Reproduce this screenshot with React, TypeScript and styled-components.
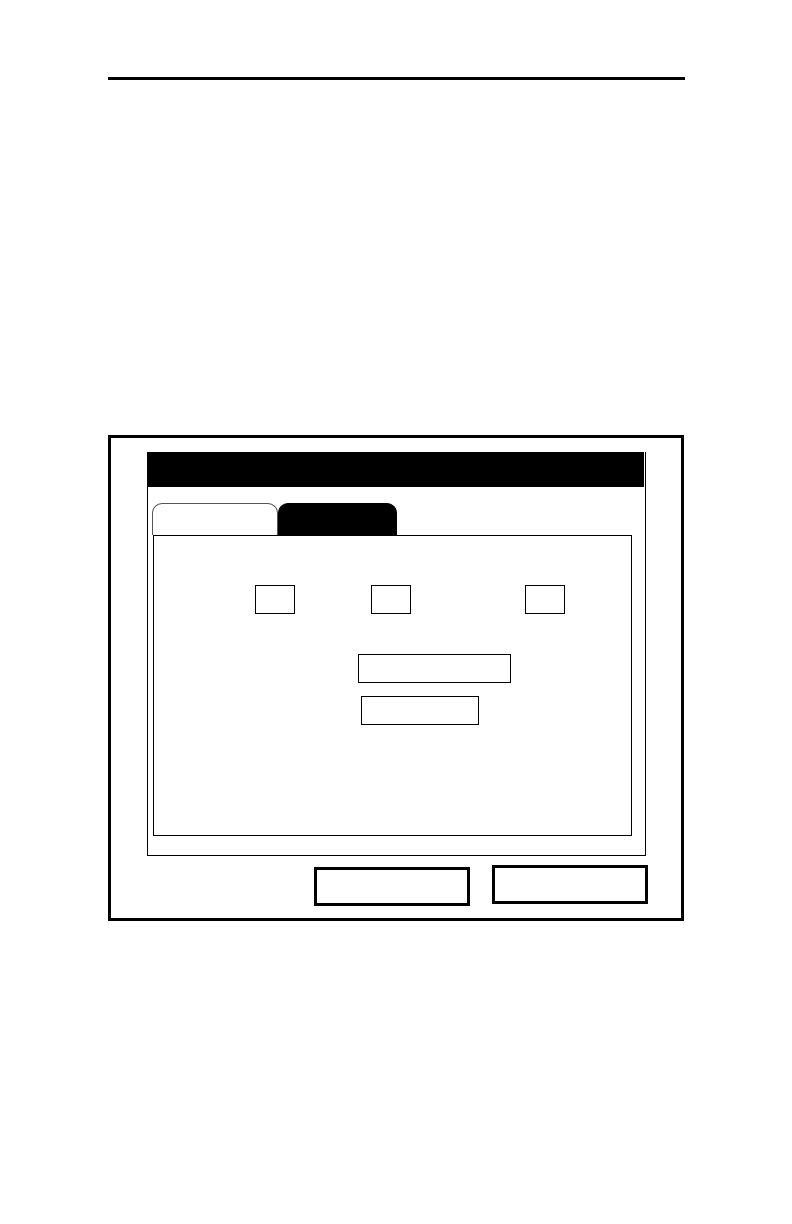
import styled, { createGlobalStyle } from 'styled-components';

const GlobalStyle = createGlobalStyle`
  html, body {
    margin: 0;
    padding: 0;
    background: #ffffff;
    font-family: "Liberation Sans", Arial, sans-serif;
  }
`;

const Page = styled.div`
  width: 792px;
  min-height: 1224px;
  padding: 77px 0 0 108px;
  box-sizing: border-box;
`;

const Rule = styled.div`
  width: 577px;
  height: 3px;
  background: #000;
`;

const Frame = styled.div`
  margin-top: 355px;
  width: 576px;
  height: 486px;
  box-sizing: border-box;
  border: 3px solid #000;
  padding: 14px 0 0 36px;
  display: flex;
  flex-direction: column;
`;

const Screen = styled.div`
  width: 499px;
  height: 404px;
  box-sizing: border-box;
  border: 1px solid #000;
  border-top: none;
  display: flex;
  flex-direction: column;
  padding: 0 0 0 4px;
`;

const TitleBar = styled.div`
  height: 35px;
  margin: 0 1px 0 -4px;
  background: #000;
`;

const Tabs = styled.div`
  display: flex;
  margin-top: 16px;
  height: 32px;
`;

const Tab = styled.div<{ $active?: boolean; $width: number }>`
  width: ${({ $width }) => $width}px;
  box-sizing: border-box;
  border: 1px solid ${({ $active }) => ($active ? '#000' : '#555')};
  border-bottom: none;
  border-radius: 10px 10px 0 0;
  background: ${({ $active }) => ($active ? '#000' : '#fff')};
`;

const Panel = styled.div`
  width: 479px;
  height: 301px;
  margin-left: 1px;
  box-sizing: border-box;
  border: 1px solid #000;
  display: flex;
  flex-direction: column;
`;

const Row = styled.div<{ $top: number; $left: number }>`
  display: flex;
  margin-top: ${({ $top }) => $top}px;
  padding-left: ${({ $left }) => $left}px;
`;

const Field = styled.div<{ $width: number; $gap?: number }>`
  width: ${({ $width }) => $width}px;
  height: 29px;
  margin-left: ${({ $gap }) => $gap ?? 0}px;
  box-sizing: border-box;
  border: 1px solid #000;
`;

const ButtonRow = styled.div`
  display: flex;
  align-items: flex-start;
  margin-top: 9px;
  padding-left: 167px;
  gap: 22px;
`;

const Button = styled.div<{ $offset?: number }>`
  width: 156px;
  height: 39px;
  margin-top: ${({ $offset }) => $offset ?? 0}px;
  box-sizing: border-box;
  border: 3px solid #000;
`;

export default function App() {
  return (
    <>
      <GlobalStyle />
      <Page>
        <Rule />
        <Frame>
          <Screen>
            <TitleBar />
            <Tabs>
              <Tab $width={126} />
              <Tab $width={119} $active />
            </Tabs>
            <Panel>
              <Row $top={49} $left={101}>
                <Field $width={40} />
                <Field $width={40} $gap={76} />
                <Field $width={40} $gap={114} />
              </Row>
              <Row $top={40} $left={204}>
                <Field $width={153} />
              </Row>
              <Row $top={13} $left={207}>
                <Field $width={118} />
              </Row>
            </Panel>
          </Screen>
          <ButtonRow>
            <Button $offset={2} />
            <Button />
          </ButtonRow>
        </Frame>
      </Page>
    </>
  );
}
